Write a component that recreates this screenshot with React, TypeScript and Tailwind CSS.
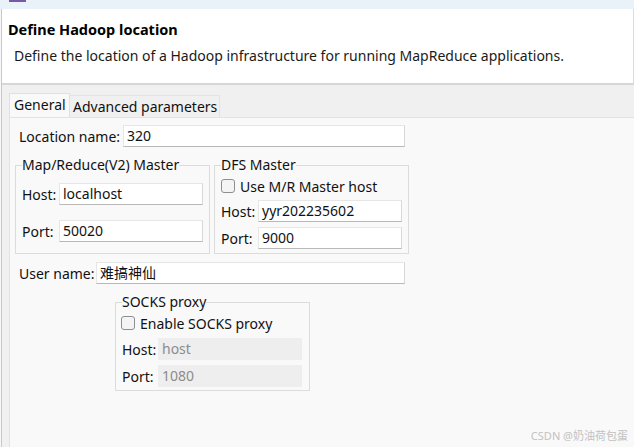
import React from "react";

const font = { fontFamily: '"Noto Sans", "Noto Sans CJK SC", sans-serif' };

function Field({ value, disabled, w }: { value: string; disabled?: boolean; w: string }) {
  return (
    <div
      className={
        "h-[22px] shrink-0 flex items-center pl-[3px] text-[14px] leading-none border whitespace-nowrap " +
        w +
        " " +
        (disabled
          ? "bg-[#eeeeee] border-[#eeeeee] text-[#8c8c8c]"
          : "bg-white border-[#e6e6e6] border-b-[#b8b8b8] border-r-[#d8d8d8] text-[#111111]")
      }
    >
      {value}
    </div>
  );
}

function Check({ label }: { label: string }) {
  return (
    <div className="flex items-center gap-[5px] h-[20px] text-[14px] text-[#111111] whitespace-nowrap">
      <div className="w-[14px] h-[14px] shrink-0 rounded-[3px] border border-[#8e8e8e] bg-[#f4f4f4]" />
      <span>{label}</span>
    </div>
  );
}

function Label({ text, w }: { text: string; w: string }) {
  return <span className={"text-[14px] whitespace-nowrap shrink-0 " + w}>{text}</span>;
}

export default function App() {
  return (
    <div className="w-[634px] h-[447px] relative overflow-hidden bg-[#f0f0f0] text-[#111111]" style={font}>
      <div className="h-[9px] bg-[#eaf2f9] flex">
        <div className="ml-[9px] w-[17px] h-[2px] bg-[#7a58a8]" />
      </div>
      <div className="flex h-[438px]">
        <div className="w-px bg-[#f7f7f7]" />
        <div className="w-px bg-[#c9c9c9]" />
        <div className="flex-1 flex flex-col min-w-0">
          <div className="h-[74px] bg-white border-r border-[#dcdcdc] flex flex-col">
            <div className="pl-[6px] pt-[10px] text-[14.5px] leading-[20px] font-bold text-black whitespace-nowrap">
              Define Hadoop location
            </div>
            <div className="pl-[12px] pt-[7px] text-[14px] leading-[20px] text-[#1a1a1a] whitespace-nowrap">
              Define the location of a Hadoop infrastructure for running MapReduce applications.
            </div>
          </div>
          <div className="h-[2px] bg-[#d6d6d6]" />
          <div className="flex-1 flex flex-col pl-[7px] pt-[8px]">
            <div className="flex items-end h-[24px]">
              <div className="w-[61px] h-[24px] bg-[#f9f9f9] border border-b-0 border-[#e0e0e0] pl-[4px] text-[14px] leading-[22px] whitespace-nowrap">
                General
              </div>
              <div className="w-[150px] h-[22px] bg-[#f0f0f0] border border-l-0 border-b-0 border-[#e3e3e3] pl-[3px] text-[14px] leading-[21px] whitespace-nowrap">
                Advanced parameters
              </div>
            </div>
            <div className="flex-1 bg-[#f9f9f9] border-l border-t border-[#e3e3e3] pt-[7px]">
              <div className="flex items-center pl-[9px] gap-[5px]">
                <Label text="Location name:" w="w-[99px]" />
                <Field value="320" w="w-[282px]" />
              </div>

              <div className="flex gap-[4px] ml-[5px] mt-[9px]">
                <fieldset className="w-[195px] border border-[#dcdcdc] px-[6px] pb-[10px]">
                  <legend className="text-[14px] leading-[18px] whitespace-nowrap">Map/Reduce(V2) Master</legend>
                  <div className="flex items-center mt-[9px]">
                    <Label text="Host:" w="w-[37px]" />
                    <Field value="localhost" w="w-[144px]" />
                  </div>
                  <div className="flex items-center mt-[15px]">
                    <Label text="Port:" w="w-[37px]" />
                    <Field value="50020" w="w-[144px]" />
                  </div>
                </fieldset>
                <fieldset className="w-[195px] border border-[#dcdcdc] px-[6px] pb-[4px]">
                  <legend className="text-[14px] leading-[18px] whitespace-nowrap">DFS Master</legend>
                  <div className="mt-[2px]">
                    <Check label="Use M/R Master host" />
                  </div>
                  <div className="flex items-center mt-[4px]">
                    <Label text="Host:" w="w-[37px]" />
                    <Field value="yyr202235602" w="w-[144px]" />
                  </div>
                  <div className="flex items-center mt-[5px]">
                    <Label text="Port:" w="w-[37px]" />
                    <Field value="9000" w="w-[144px]" />
                  </div>
                </fieldset>
              </div>

              <div className="flex items-center pl-[9px] gap-[4px] mt-[8px]">
                <Label text="User name:" w="w-[73px]" />
                <Field value="难搞神仙" w="w-[309px]" />
              </div>

              <fieldset className="ml-[105px] mt-[9px] w-[195px] border border-[#dcdcdc] px-[6px] pb-[3px]">
                <legend className="text-[14px] leading-[18px] whitespace-nowrap">SOCKS proxy</legend>
                <div className="mt-[2px] -ml-px">
                  <Check label="Enable SOCKS proxy" />
                </div>
                <div className="flex items-center mt-[5px]">
                  <Label text="Host:" w="w-[36px]" />
                  <Field value="host" disabled w="w-[144px]" />
                </div>
                <div className="flex items-center mt-[5px]">
                  <Label text="Port:" w="w-[36px]" />
                  <Field value="1080" disabled w="w-[144px]" />
                </div>
              </fieldset>
            </div>
          </div>
        </div>
      </div>
      <div className="absolute right-[6px] bottom-[4px] text-[11px] leading-[14px] text-[#c2c2c2] whitespace-nowrap">
        CSDN @奶油荷包蛋
      </div>
    </div>
  );
}
